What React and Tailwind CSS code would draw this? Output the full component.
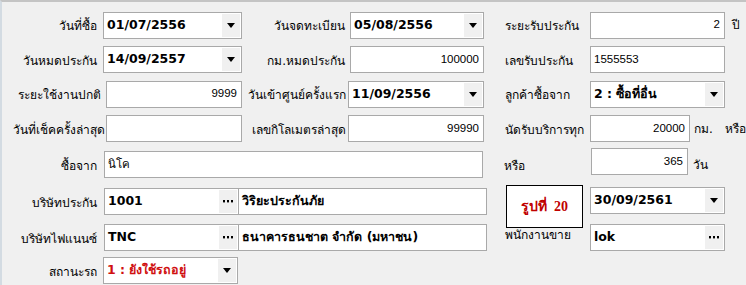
import React from "react";

const Label = ({ children, className = "" }) => (
  <span className={"whitespace-nowrap text-[12px] text-black leading-none " + className}>{children}</span>
);

const Arrow = () => (
  <div className="absolute right-[1px] top-[1px] bottom-[1px] w-[18px] bg-[#f0f0f0] flex items-center justify-center">
    <svg width="8" height="5" viewBox="0 0 8 5"><path d="M0 0H8L4 5Z" fill="#000" /></svg>
  </div>
);

const Dots = () => (
  <div className="absolute right-[1px] top-[1px] bottom-[1px] w-[18px] bg-[#f0f0f0] flex items-center justify-center">
    <svg width="10" height="3" viewBox="0 0 10 3">
      <rect x="0" y="0" width="2" height="2.4" fill="#000" />
      <rect x="4" y="0" width="2" height="2.4" fill="#000" />
      <rect x="8" y="0" width="2" height="2.4" fill="#000" />
    </svg>
  </div>
);

const Box = ({ w, children, right, bold, red, arrow, dots, className = "" }) => (
  <div
    className={
      "relative shrink-0 h-[27px] bg-white border border-[#a9a9a9] flex items-center " +
      (right ? "justify-end pr-[4px] " : "pl-[3px] ") +
      className
    }
    style={{ width: w }}
  >
    <span
      className={
        "whitespace-nowrap leading-none " +
        (bold
          ? "font-['DejaVu_Sans','Noto_Sans',sans-serif] font-bold text-[12.5px] "
          : "font-['Liberation_Sans','Noto_Sans',sans-serif] text-[11.5px] ") +
        (red ? "text-[#d01010]" : "text-black")
      }
    >
      {children}
    </span>
    {arrow && <Arrow />}
    {dots && <Dots />}
  </div>
);

export default function App() {
  return (
    <div className="relative w-[746px] h-[285px] overflow-hidden bg-[#f0f0f0] border-t-2 border-t-[#c4c4c4] border-l-2 border-l-[#d3dbe2] font-['Tahoma','DejaVu_Sans','Noto_Sans',sans-serif]">
      <div className="flex flex-col pt-[6px]">
        {/* Row 1 */}
        <div className="flex items-center h-[34px]">
          <div className="w-[95px] text-right"><Label>วันที่ซื้อ</Label></div>
          <Box w={139} bold arrow className="ml-[6px]">01/07/2556</Box>
          <div className="w-[103px] text-right"><Label>วันจดทะเบียน</Label></div>
          <Box w={134} bold arrow className="ml-[5px]">05/08/2556</Box>
          <div className="ml-[21px] w-[85px]"><Label>ระยะรับประกัน</Label></div>
          <Box w={135} right>2</Box>
          <Label className="ml-[7px]">ปี</Label>
        </div>
        {/* Row 2 */}
        <div className="flex items-center h-[35px]">
          <div className="w-[95px] text-right"><Label>วันหมดประกัน</Label></div>
          <Box w={139} bold arrow className="ml-[6px]">14/09/2557</Box>
          <div className="w-[103px] text-right"><Label>กม.หมดประกัน</Label></div>
          <Box w={134} right className="ml-[5px]">100000</Box>
          <div className="ml-[21px] w-[85px]"><Label>เลขรับประกัน</Label></div>
          <Box w={135}>1555553</Box>
        </div>
        {/* Row 3 */}
        <div className="flex items-center h-[34px]">
          <div className="w-[99px] text-right"><Label>ระยะใช้งานปกติ</Label></div>
          <Box w={136} right className="ml-[5px]">9999</Box>
          <div className="w-[104px] text-right"><Label>วันเข้าศูนย์ครั้งแรก</Label></div>
          <Box w={136} bold arrow className="ml-[2px]">11/09/2556</Box>
          <div className="ml-[21px] w-[85px]"><Label>ลูกค้าซื้อจาก</Label></div>
          <Box w={135} bold arrow>2 : ซื้อที่อื่น</Box>
        </div>
        {/* Row 4 */}
        <div className="flex items-center h-[35px]">
          <div className="w-[103px] text-right"><Label>วันที่เช็คครั้งล่าสุด</Label></div>
          <Box w={136} className="ml-[1px]" />
          <div className="w-[104px] text-right"><Label>เลขกิโลเมตรล่าสุด</Label></div>
          <Box w={136} right className="ml-[2px]">99990</Box>
          <div className="ml-[21px] w-[85px]"><Label>นัดรับบริการทุก</Label></div>
          <Box w={100} right>20000</Box>
          <Label className="ml-[4px] text-[11.5px]">กม.</Label>
          <Label className="ml-[12px] text-[11.5px]">หรือ</Label>
        </div>
        {/* Row 5 */}
        <div className="flex items-center h-[37px]">
          <div className="w-[95px] text-right"><Label>ซื้อจาก</Label></div>
          <Box w={379} className="ml-[7px]">นิโค</Box>
          <div className="ml-[21px] w-[87px]"><Label>หรือ</Label></div>
          <Box w={97} right className="-mt-[6px]">365</Box>
          <Label className="ml-[5px]">วัน</Label>
        </div>
        {/* Row 6 */}
        <div className="flex items-center h-[37px]">
          <div className="w-[95px] text-right"><Label>บริษัทประกัน</Label></div>
          <Box w={135} bold dots className="ml-[7px]">1001</Box>
          <Box w={249} bold className="-ml-[1px]">วิริยะประกันภัย</Box>
          <div className="ml-[18px] w-[85px]" />
          <Box w={135} bold arrow className="-mt-[2px]">30/09/2561</Box>
        </div>
        {/* Row 7 */}
        <div className="flex items-center h-[35px]">
          <div className="w-[95px] text-right"><Label>บริษัทไฟแนนซ์</Label></div>
          <Box w={135} bold dots className="ml-[7px]">TNC</Box>
          <Box w={249} bold className="-ml-[1px]">ธนาคารธนชาต จำกัด (มหาชน)</Box>
          <div className="ml-[18px] w-[85px] -mt-[8px]"><Label>พนักงานขาย</Label></div>
          <Box w={135} bold dots>lok</Box>
        </div>
        {/* Row 8 */}
        <div className="flex items-center h-[31px]">
          <div className="w-[95px] text-right"><Label>สถานะรถ</Label></div>
          <Box w={135} bold red arrow className="ml-[6px]">1 : ยังใช้รถอยู่</Box>
        </div>
      </div>

      {/* overlay caption */}
      <div className="absolute left-[504px] top-[183px] w-[77px] h-[43px] bg-white border border-black flex items-center justify-center">
        <span className="font-['Liberation_Serif',serif] font-bold text-[14px] text-[#c00000] leading-none whitespace-nowrap">
          รูปที่&nbsp; 20
        </span>
      </div>
    </div>
  );
}
